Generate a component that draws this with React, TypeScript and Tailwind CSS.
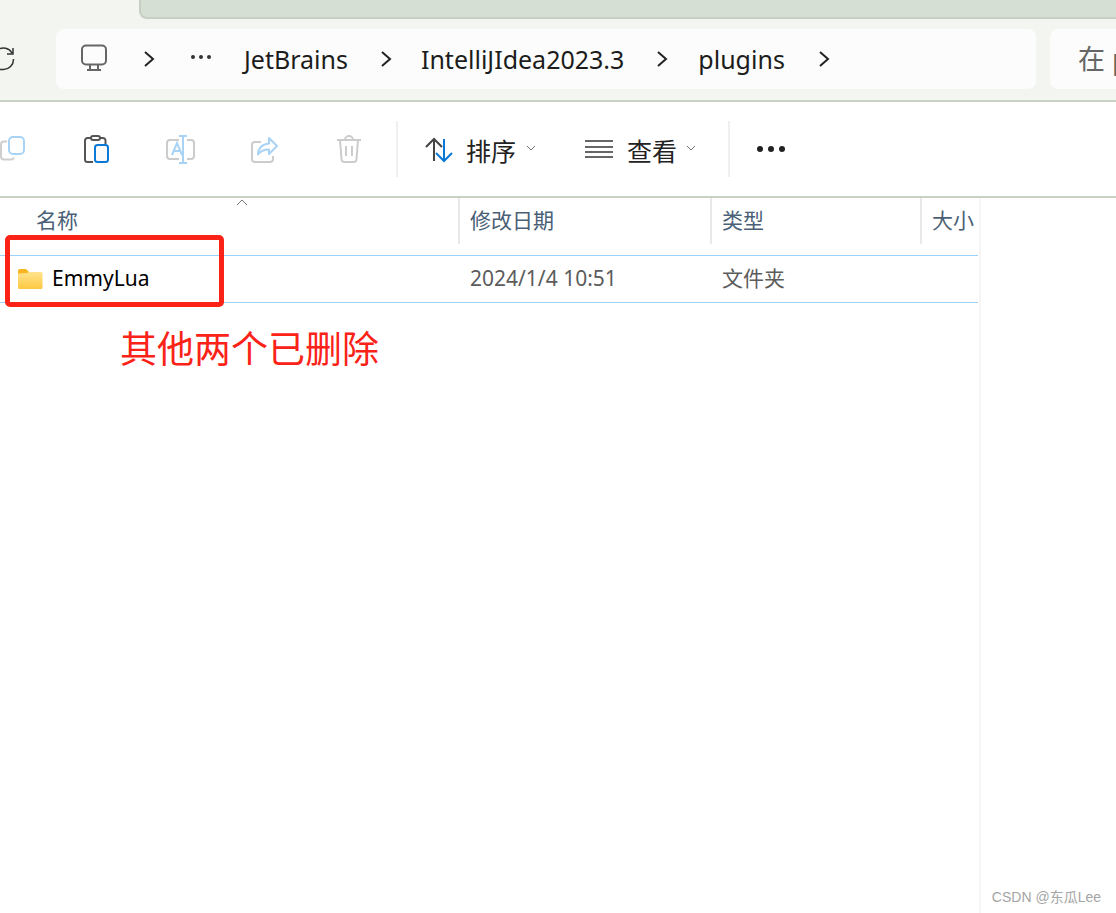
import React from 'react';

const font = { sans: 'font-["Noto_Sans","Noto_Sans_CJK_SC",sans-serif]' };

const Chevron = () => (
  <svg width="12" height="18" viewBox="0 0 12 18" fill="none" stroke="#222" strokeWidth="2" className="shrink-0">
    <path d="M2 2l8 7-8 7" />
  </svg>
);

const Small = () => (
  <svg width="10" height="6" viewBox="0 0 10 6" fill="none" stroke="#777" strokeWidth="1" className="shrink-0">
    <path d="M1 1l4 4 4-4" />
  </svg>
);

const Divider = () => <div className="w-[2px] h-[56px] bg-[#efefef] shrink-0" />;

const CopyIcon = () => (
  <svg width="26" height="26" viewBox="0 0 26 26" fill="none" strokeWidth="2">
    <path d="M7 5.500H4A3 3 0 0 0 1 8.500v12a3 3 0 0 0 3 3h7a3 3 0 0 0 3-2" stroke="#cfcfcf" />
    <rect x="9" y="1" width="15" height="17" rx="4" stroke="#a9d3f5" />
  </svg>
);

const PasteIcon = () => (
  <svg width="26" height="28" viewBox="0 0 26 28" fill="none" strokeWidth="2">
    <path d="M9 27H3.500A2.500 2.500 0 0 1 1 24.500V5.500A2.500 2.500 0 0 1 3.500 3H19a2.500 2.500 0 0 1 2.500 2.500V9" stroke="#555" />
    <rect x="7" y="1" width="9" height="4" rx="2" fill="#fff" stroke="#555" />
    <rect x="11" y="10" width="13" height="17" rx="2.500" fill="#fafafa" stroke="#0a78d7" />
  </svg>
);

const RenameIcon = () => (
  <svg width="30" height="30" viewBox="0 0 30 30" fill="none" strokeWidth="2">
    <path d="M13 5H4a3 3 0 0 0-3 3v13a3 3 0 0 0 3 3h9M21 5h4a3 3 0 0 1 3 3v13a3 3 0 0 1-3 3h-4" stroke="#cccccc" />
    <path d="M13 1h8M17 1v27M13 28h8M6 20l5-12 5 12M8 16h6" stroke="#a9d3f5" />
  </svg>
);

const ShareIcon = () => (
  <svg width="28" height="28" viewBox="0 0 28 28" fill="none" strokeWidth="2">
    <path d="M10 6H4a3 3 0 0 0-3 3v14a3 3 0 0 0 3 3h15a3 3 0 0 0 3-3v-3" stroke="#cccccc" />
    <path d="M18 2l8 8-8 8v-4.500c-5 0-8 1-11 5 0-6 4-10.500 11-11z" stroke="#a9d3f5" strokeLinejoin="round" />
  </svg>
);

const TrashIcon = () => (
  <svg width="26" height="28" viewBox="0 0 26 28" fill="none" stroke="#cccccc" strokeWidth="2">
    <path d="M1 5h24M9 5a4 4 0 0 1 8 0M4 5l1.500 19a3 3 0 0 0 3 3h9a3 3 0 0 0 3-3L22 5M10 11v10M16 11v10" />
  </svg>
);

const SortIcon = () => (
  <svg width="28" height="26" viewBox="0 0 28 26" fill="none" strokeWidth="2">
    <path d="M9 24V2M1 10l8-8 8 8" stroke="#444" />
    <path d="M19 2v22M11 16l8 8 8-8" stroke="#0a78d7" />
  </svg>
);

const FolderIcon = () => (
  <svg width="26" height="22" viewBox="0 0 26 22" className="shrink-0">
    <defs>
      <linearGradient id="folder" x1="0" y1="0" x2="0" y2="1">
        <stop offset="0" stopColor="#ffe48f" />
        <stop offset="1" stopColor="#fdc940" />
      </linearGradient>
    </defs>
    <path d="M1 3a2 2 0 0 1 2-2h6l3 3v3H1z" fill="#f9b61f" />
    <path d="M1 6.500a1 1 0 0 1 1-1L10 5l2-1h12a1.500 1.500 0 0 1 1.500 1.500V19.500A1.500 1.500 0 0 1 24 21H2a1 1 0 0 1-1-1z" fill="url(#folder)" />
  </svg>
);

export default function App() {
  return (
    <div className={`relative w-[1116px] h-[913px] overflow-hidden bg-white ${font.sans}`}>
      {/* tab strip */}
      <div className="h-[19px] bg-[#f3f5f0] pl-[139px]">
        <div className="h-[19px] bg-[#d5dfd4] border-b-2 border-l-2 border-[#c5cfc3] rounded-bl-[8px]" />
      </div>

      {/* address row */}
      <div className="h-[83px] bg-[#f3f5f0] border-b-2 border-[#c9d0c4] flex items-start pt-[10px] pl-[56px] relative">
        <svg width="16" height="24" viewBox="0 0 16 24" fill="none" stroke="#333" strokeWidth="1.500" className="absolute left-0 top-[28px]">
          <path d="M-2 2.500A10 10 0 0 1 12 6M13 1v6H7M13.500 12A10 10 0 0 1 3 22.500H-2" />
        </svg>
        <div className="w-[980px] h-[60px] rounded-[8px] bg-[#fbfcfb] flex items-center text-[25px] text-[#1c1c1c] shrink-0">
          <svg width="28" height="28" viewBox="0 0 28 28" fill="none" stroke="#666" strokeWidth="2" className="ml-[24px] mt-[-3px] shrink-0">
            <rect x="2" y="1.500" width="24" height="19" rx="4" />
            <path d="M10 21v4M18 21v4M7 26h14" />
          </svg>
          <div className="ml-[35px]"><Chevron /></div>
          <div className="ml-[36px] flex gap-[4px] mt-[-4px]">
            <span className="w-[4px] h-[4px] rounded-full bg-[#333]" />
            <span className="w-[4px] h-[4px] rounded-full bg-[#333]" />
            <span className="w-[4px] h-[4px] rounded-full bg-[#333]" />
          </div>
          <span className="ml-[33px] mt-[1px]">JetBrains</span>
          <div className="ml-[32px]"><Chevron /></div>
          <span className="ml-[29px] mt-[1px]">IntelliJIdea2023.3</span>
          <div className="ml-[32px]"><Chevron /></div>
          <span className="ml-[30px] mt-[1px]">plugins</span>
          <div className="ml-[33px]"><Chevron /></div>
        </div>
        <div className="ml-[14px] flex-1 h-[60px] rounded-l-[8px] bg-[#fbfcfb] pl-[28px] flex items-center text-[27px] text-[#666] overflow-hidden whitespace-nowrap">
          在 p
        </div>
      </div>

      {/* toolbar */}
      <div className="h-[96px] flex items-center border-b-2 border-[#c9d0c4] relative">
        <div className="w-[396px] flex items-center relative h-full shrink-0">
          <div className="absolute left-0 top-[34px]"><CopyIcon /></div>
          <div className="absolute left-[84px] top-[33px]"><PasteIcon /></div>
          <div className="absolute left-[166px] top-[33px]"><RenameIcon /></div>
          <div className="absolute left-[251px] top-[34px]"><ShareIcon /></div>
          <div className="absolute left-[336px] top-[33px]"><TrashIcon /></div>
        </div>
        <Divider />
        <div className="ml-[27px] mt-[2px] flex items-center"><SortIcon /></div>
        <span className="ml-[13px] mt-[5px] text-[25px] text-[#222]">排序</span>
        <div className="ml-[10px] mt-[-3px]"><Small /></div>
        <svg width="28" height="20" viewBox="0 0 28 20" fill="none" stroke="#666" strokeWidth="2" className="ml-[49px] shrink-0">
          <path d="M0 2h28M0 8h28M0 13h28M0 18h28" />
        </svg>
        <span className="ml-[14px] mt-[5px] text-[25px] text-[#222]">查看</span>
        <div className="ml-[9px] mt-[-3px]"><Small /></div>
        <div className="ml-[32px]"><Divider /></div>
        <div className="ml-[27px] flex gap-[5px]">
          <span className="w-[6px] h-[6px] rounded-full bg-[#222]" />
          <span className="w-[6px] h-[6px] rounded-full bg-[#222]" />
          <span className="w-[6px] h-[6px] rounded-full bg-[#222]" />
        </div>
      </div>

      {/* file list */}
      <div className="w-[981px] h-[715px] border-r-2 border-[#f6f6f6]">
        <div className="h-[57px] flex text-[21px] text-[#4a6076] w-[979px]">
          <div className="w-[460px] h-[46px] pl-[36px] flex items-center relative border-r-2 border-[#e8e8e8]">
            名称
            <svg width="12" height="7" viewBox="0 0 12 7" fill="none" stroke="#777" strokeWidth="1" className="absolute left-[236px] top-[1px]">
              <path d="M1 6l5-5 5 5" />
            </svg>
          </div>
          <div className="w-[252px] h-[46px] pl-[10px] flex items-center border-r-2 border-[#e8e8e8]">修改日期</div>
          <div className="w-[210px] h-[46px] pl-[10px] flex items-center border-r-2 border-[#e8e8e8]">类型</div>
          <div className="h-[46px] pl-[10px] flex items-center overflow-hidden whitespace-nowrap">大小</div>
        </div>
        <div className="h-[48px] w-[978px] flex items-center border-y border-[#99d1fb] text-[21px] text-[#5c5c5c]">
          <div className="w-[460px] pl-[17px] flex items-center shrink-0">
            <FolderIcon />
            <span className="ml-[9px] text-[#000]">EmmyLua</span>
          </div>
          <div className="w-[252px] pl-[10px] shrink-0">2024/1/4 10:51</div>
          <div className="pl-[10px]">文件夹</div>
        </div>
      </div>

      {/* annotation */}
      <div className="absolute left-[5px] top-[235px] w-[219px] h-[72px] border-[5px] border-[#fb2318] rounded-[5px]" />
      <div className="absolute left-[120px] top-[324px] text-[37px] leading-[50px] text-[#fb2318] whitespace-nowrap">其他两个已删除</div>

      {/* watermark */}
      <div className="absolute right-[15px] top-[888px] text-[14px] leading-[18px] text-[#a5a5a5] whitespace-nowrap font-['Liberation_Sans','Noto_Sans_CJK_SC',sans-serif]">CSDN @东瓜Lee</div>
    </div>
  );
}
